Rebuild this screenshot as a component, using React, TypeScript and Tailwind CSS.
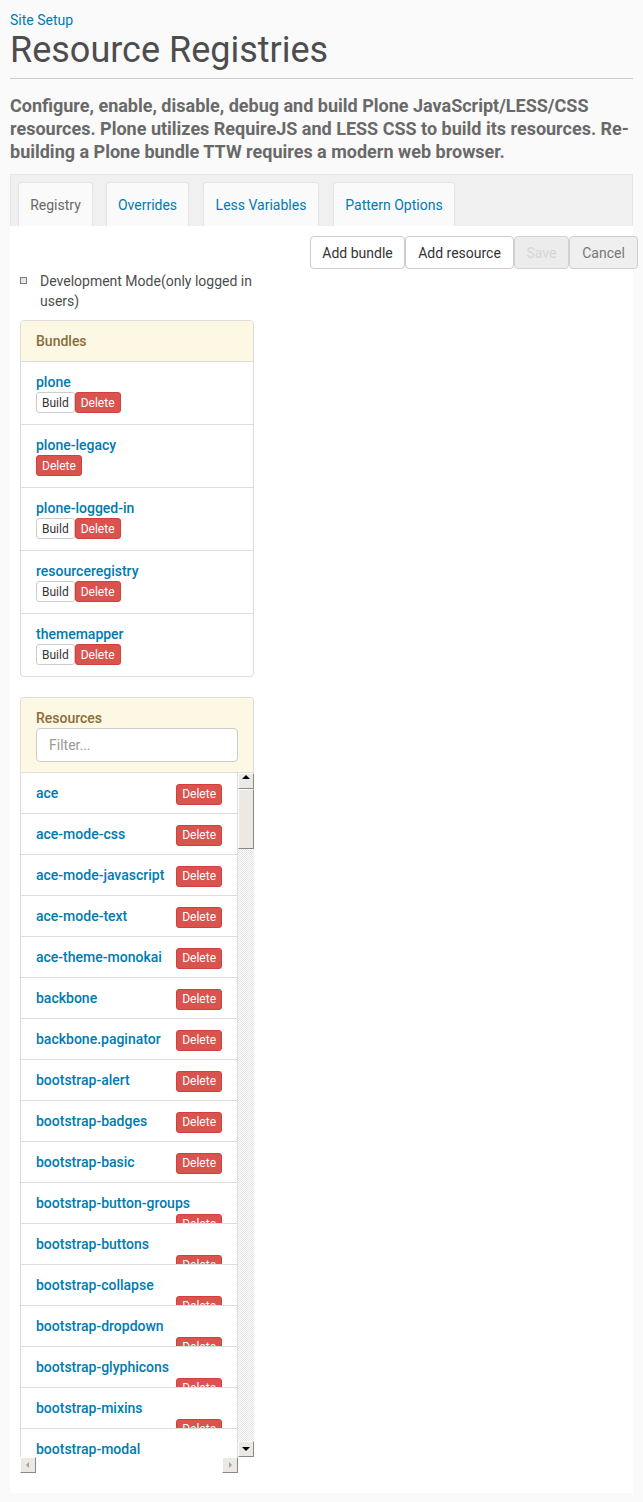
import React from "react";

const bundles: { name: string; build: boolean }[] = [
  { name: "plone", build: true },
  { name: "plone-legacy", build: false },
  { name: "plone-logged-in", build: true },
  { name: "resourceregistry", build: true },
  { name: "thememapper", build: true },
];

const resources: { name: string; wrap: boolean }[] = [
  { name: "ace", wrap: false },
  { name: "ace-mode-css", wrap: false },
  { name: "ace-mode-javascript", wrap: false },
  { name: "ace-mode-text", wrap: false },
  { name: "ace-theme-monokai", wrap: false },
  { name: "backbone", wrap: false },
  { name: "backbone.paginator", wrap: false },
  { name: "bootstrap-alert", wrap: false },
  { name: "bootstrap-badges", wrap: false },
  { name: "bootstrap-basic", wrap: false },
  { name: "bootstrap-button-groups", wrap: true },
  { name: "bootstrap-buttons", wrap: true },
  { name: "bootstrap-collapse", wrap: true },
  { name: "bootstrap-dropdown", wrap: true },
  { name: "bootstrap-glyphicons", wrap: true },
  { name: "bootstrap-mixins", wrap: true },
  { name: "bootstrap-modal", wrap: true },
];

function DeleteBtn() {
  return (
    <span className="inline-flex h-[21px] items-center rounded-[3px] border border-[#d43f3a] bg-[#d9534f] px-[5px] text-[12px] leading-[18px] text-white">
      Delete
    </span>
  );
}

function BuildBtn() {
  return (
    <span className="inline-flex h-[21px] items-center rounded-[3px] border border-[#ccc] bg-white px-[5px] text-[12px] leading-[18px] text-[#333]">
      Build
    </span>
  );
}

function ArrowBtn({ dir, dim }: { dir: "up" | "down" | "left" | "right"; dim?: boolean }) {
  const color = dim ? "#a3a3a3" : "#000";
  let points = "";
  if (dir === "up") points = "4,6 8,2 12,6";
  if (dir === "down") points = "4,6 12,6 8,10";
  if (dir === "left") points = "9,5 9,11 6,8";
  if (dir === "right") points = "7,5 7,11 10,8";
  return (
    <div className="flex h-[16px] w-[16px] shrink-0 items-center justify-center border border-t-[#fff] border-l-[#fff] border-r-[#888] border-b-[#888] bg-[#ece9e4]">
      <svg width="16" height="16" viewBox="0 0 16 16" className="-m-px">
        <polygon points={points} fill={color} />
      </svg>
    </div>
  );
}

export default function App() {
  return (
    <div className="min-h-[1502px] bg-[#fafafa] px-[10px] pt-[10px] pb-[10px] font-[Roboto,sans-serif] text-[14px] leading-[20px] text-[#4d4d4d]">
      <div className="text-[14px] leading-[20px] text-[#007bb1]">Site Setup</div>
      <h1 className="text-[36px] leading-[40px] font-normal text-[#4d4d4d]">Resource Registries</h1>
      <div className="mt-[8px] border-t border-[#ccc]" />
      <p className="mt-[15px] text-[18px] leading-[23px] font-bold text-[#696969]">
        Configure, enable, disable, debug and build Plone JavaScript/LESS/CSS resources. Plone utilizes RequireJS and LESS CSS to build its resources. Re-building a Plone bundle TTW requires a modern web browser.
      </p>

      <div className="mt-[11px] border border-b-0 border-[#e5e5e5] bg-[#f0f0f0]">
        <div className="flex pl-[7px] pt-[7px]">
          <div className="flex h-[44px] w-[75px] items-center justify-center rounded-t-[4px] border border-b-0 border-[#e3e3e3] bg-[#fafafa] text-[#696969]">
            Registry
          </div>
          <div className="ml-[13px] flex h-[44px] w-[83px] items-center justify-center rounded-t-[4px] border border-b-0 border-[#e3e3e3] bg-[#fafafa] text-[#007bb1]">
            Overrides
          </div>
          <div className="ml-[14px] flex h-[44px] w-[116px] items-center justify-center rounded-t-[4px] border border-b-0 border-[#e3e3e3] bg-[#fafafa] text-[#007bb1]">
            Less Variables
          </div>
          <div className="ml-[14px] flex h-[44px] w-[122px] items-center justify-center rounded-t-[4px] border border-b-0 border-[#e3e3e3] bg-[#fafafa] text-[#007bb1]">
            Pattern Options
          </div>
        </div>
      </div>

      <div className="bg-white px-[10px] pt-[10px] pb-[20px]">
        <div className="mr-[-15px] mb-[2px] flex justify-end">
          <div className="flex h-[33px] w-[95px] items-center justify-center rounded-[4px] border border-[#ccc] bg-white text-[#333]">Add bundle</div>
          <div className="flex h-[33px] w-[109px] items-center justify-center rounded-[4px] border border-[#ccc] bg-white text-[#333]">Add resource</div>
          <div className="flex h-[33px] w-[55px] items-center justify-center rounded-[4px] border border-[#d2d2d2] bg-[#ececec] text-[#d6d6d6]">Save</div>
          <div className="flex h-[33px] w-[69px] items-center justify-center rounded-[4px] border border-[#cfcfcf] bg-[#efefef] text-[#777]">Cancel</div>
        </div>

        <div className="w-[234px]">
          <div className="flex items-start">
            <div className="mt-[6px] h-[7px] w-[7px] shrink-0 border border-[#7a7a7a] bg-gradient-to-br from-[#dcdcdc] to-[#f4f4f4]" />
            <div className="ml-[13px]">Development Mode(only logged in users)</div>
          </div>

          <div className="mt-[9px] overflow-hidden rounded-[4px] border border-[#ddd]">
            <div className="border-b border-[#ddd] bg-[#fcf8e3] px-[15px] py-[10px] font-medium text-[#8a6d3b]">Bundles</div>
            {bundles.map((b, i) => (
              <div
                key={b.name}
                className={`px-[15px] pt-[10px] pb-[11px] ${i < bundles.length - 1 ? "border-b border-[#ddd]" : ""}`}
              >
                <div className="font-medium text-[#007bb1]">{b.name}</div>
                <div className="flex">
                  {b.build && <BuildBtn />}
                  <DeleteBtn />
                </div>
              </div>
            ))}
          </div>

          <div className="mt-[20px] rounded-t-[4px] border border-b-0 border-[#ddd]">
            <div className="rounded-t-[4px] border-b border-[#ddd] bg-[#fcf8e3] px-[15px] pt-[10px] pb-[10px]">
              <div className="font-medium text-[#8a6d3b]">Resources</div>
              <div className="flex h-[34px] items-center rounded-[4px] border border-[#ccc] bg-white px-[12px] text-[#999]">
                Filter...
              </div>
            </div>
          </div>
          <div className="flex">
            <div className="h-[684px] w-[218px] overflow-hidden">
              {resources.map((r) => (
                <div
                  key={r.name}
                  className={`h-[41px] overflow-hidden border-x border-b border-[#ddd] px-[15px] pt-[10px] ${r.wrap ? "flex flex-col" : "flex items-start justify-between"}`}
                >
                  <div className="whitespace-nowrap font-medium text-[#007bb1]">{r.name}</div>
                  <div className={r.wrap ? "self-end" : ""}>
                    <DeleteBtn />
                  </div>
                </div>
              ))}
            </div>
            <div className="flex h-[684px] w-[16px] flex-col">
              <ArrowBtn dir="up" />
              <div className="h-[60px] border border-t-[#fff] border-l-[#fff] border-r-[#888] border-b-[#888] bg-[#ece9e4]" />
              <div className="flex-1 bg-[repeating-conic-gradient(#e4e4e4_0%_25%,#ffffff_0%_50%)] bg-[length:2px_2px]" />
              <ArrowBtn dir="down" />
            </div>
          </div>
          <div className="flex h-[16px]">
            <ArrowBtn dir="left" dim />
            <div className="w-[186px] bg-white" />
            <ArrowBtn dir="right" dim />
            <div className="w-[16px] bg-white" />
          </div>
        </div>
      </div>
    </div>
  );
}
